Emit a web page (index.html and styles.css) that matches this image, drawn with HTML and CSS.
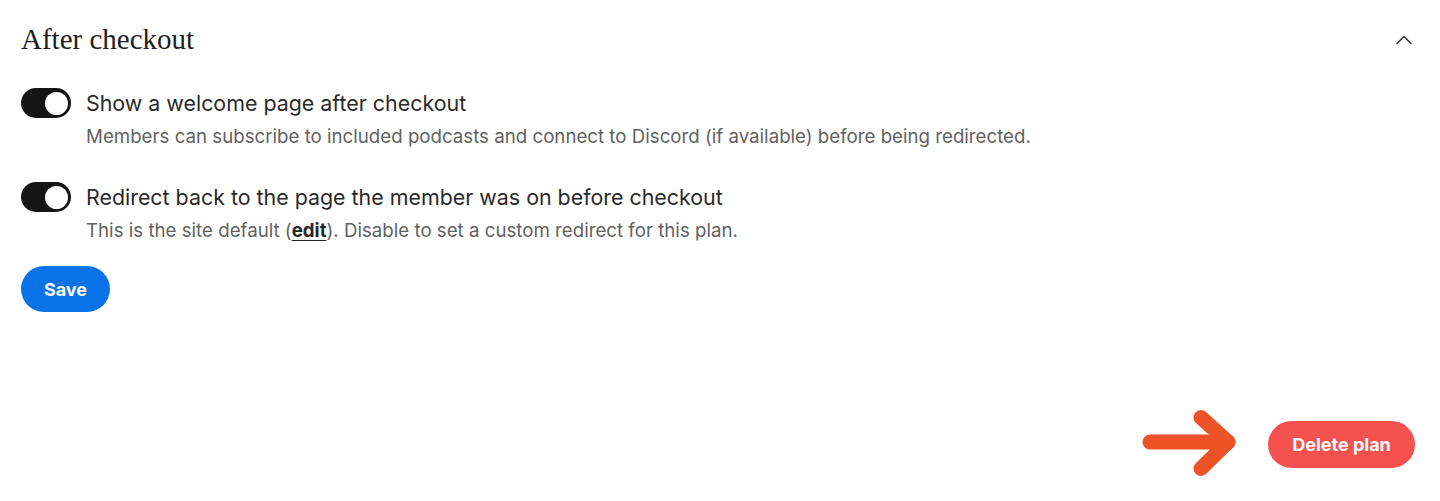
FILE: index.html
```html
<!DOCTYPE html>
<html lang="en">
<head>
<meta charset="utf-8">
<title>After checkout</title>
<link rel="stylesheet" href="styles.css">
</head>
<body>
<main class="page">
  <header class="section-header">
    <h2 class="section-title">After checkout</h2>
    <button class="collapse-btn" aria-label="Collapse">
      <svg width="18" height="12" viewBox="0 0 18 12" fill="none" stroke="#333" stroke-width="1.6" stroke-linecap="round" stroke-linejoin="round"><polyline points="2,9.5 9,2.5 16,9.5"/></svg>
    </button>
  </header>

  <div class="setting first">
    <span class="toggle on"><span class="knob"></span></span>
    <div class="setting-text">
      <div class="setting-label">Show a welcome page after checkout</div>
      <div class="setting-desc">Members can subscribe to included podcasts and connect to Discord (if available) before being redirected.</div>
    </div>
  </div>

  <div class="setting second">
    <span class="toggle on"><span class="knob"></span></span>
    <div class="setting-text">
      <div class="setting-label">Redirect back to the page the member was on before checkout</div>
      <div class="setting-desc">This is the site default (<a class="edit-link" href="#">edit</a>). Disable to set a custom redirect for this plan.</div>
    </div>
  </div>

  <button class="btn btn-save">Save</button>

  <div class="footer-row">
    <svg class="annot-arrow" width="100" height="72" viewBox="0 0 100 72" fill="none" stroke="#ee5327" stroke-width="15" stroke-linecap="round" stroke-linejoin="round">
      <line x1="8" y1="34" x2="86" y2="34"/>
      <polyline points="59,9.5 86,34 59,60.5"/>
    </svg>
    <button class="btn btn-delete">Delete plan</button>
  </div>
</main>
</body>
</html>
```

FILE: styles.css
```css
html, body {
  margin: 0;
  padding: 0;
  background: #ffffff;
}

.page {
  padding: 0 25px 0 21px;
  font-family: Inter, "Noto Sans", sans-serif;
  color: #2b2b2b;
}

.section-header {
  margin-top: 22px;
  height: 34px;
  display: flex;
  align-items: center;
  justify-content: space-between;
}

.section-title {
  margin: 0;
  font-family: "Liberation Serif", "DejaVu Serif", serif;
  font-weight: 400;
  font-size: 29px;
  line-height: 34px;
  color: #1e1e1e;
}

.collapse-btn {
  border: 0;
  background: none;
  padding: 0;
  margin-right: 2px;
  display: flex;
  align-items: center;
  margin-top: 1px;
}

.setting {
  display: flex;
  align-items: flex-start;
  gap: 15px;
}

.setting.first {
  margin-top: 32px;
}

.setting.second {
  margin-top: 31px;
}

.toggle {
  flex: none;
  width: 50px;
  height: 30px;
  border-radius: 15px;
  background: #151515;
  display: flex;
  align-items: center;
  justify-content: flex-end;
  padding: 0 3px;
  box-sizing: border-box;
}

.knob {
  width: 23px;
  height: 23px;
  border-radius: 50%;
  background: #ffffff;
}

.setting-label {
  font-size: 21.4px;
  line-height: 30px;
  color: #2a2a2a;
  font-weight: 400;
}

.setting-desc {
  margin-top: 5px;
  font-size: 18.7px;
  line-height: 28px;
  color: #626262;
}

.edit-link {
  color: #262626;
  font-weight: 700;
  text-decoration: underline;
  text-underline-offset: 3px;
}

.btn {
  border: 0;
  border-radius: 999px;
  font-family: Inter, "Noto Sans", sans-serif;
  font-weight: 700;
  font-size: 18px;
  color: #ffffff;
  cursor: pointer;
}

.btn-save {
  display: block;
  margin-top: 21px;
  height: 46px;
  width: 89px;
  padding: 0;
  background: #0b73e8;
}

.footer-row {
  margin-top: 96px;
  display: flex;
  justify-content: flex-end;
  align-items: center;
  gap: 25px;
}

.annot-arrow {
  display: block;
  margin-right: 1px;
}

.btn-delete {
  height: 47px;
  width: 147px;
  padding: 0;
  background: #f5514f;
}
```
